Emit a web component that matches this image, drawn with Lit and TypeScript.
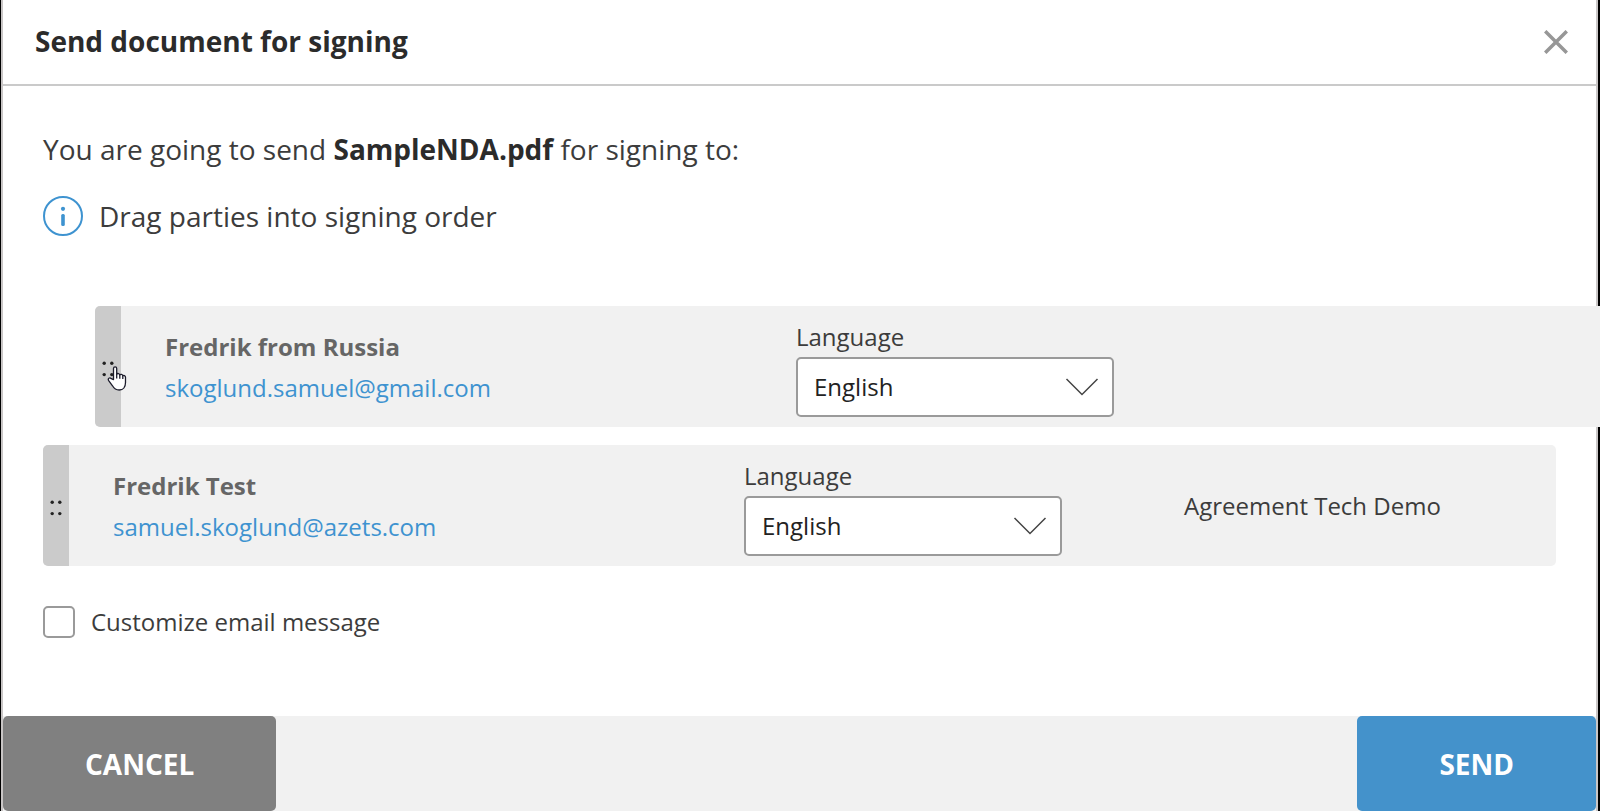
import { LitElement, html, css, svg } from "lit";
import { customElement, property, state } from "lit/decorators.js";
import { classMap } from "lit/directives/class-map.js";

interface Party {
  id: string;
  name: string;
  email: string;
  company: string;
  dragging: boolean;
}

const handCursor = svg`
  <path d="M6.500 13.600V2.600c0-2.400 3.200-2.400 3.200 0v5.600c.6-1.100 3-.9 3.100.7.7-1 2.800-.7 3 .9.8-.8 2.700-.3 2.700 1.500v5.200c0 4.200-2.200 7.500-6.200 7.500-3.600 0-5.300-1.500-6.800-4.200L1.700 14.600c-1.300-2.200 1-3.600 2.600-1.900z"
    fill="#fff" stroke="#1c1c2b" stroke-width="1.300" stroke-linejoin="round"></path>
  <path d="M9.700 8v4.600M12.800 9v3.800M15.800 10v3" fill="none" stroke="#1c1c2b" stroke-width="1.300"></path>`;

@customElement("party-row")
export class PartyRow extends LitElement {
  @property({ attribute: false }) party!: Party;

  static styles = css`
    :host {
      display: block;
    }
    .row {
      display: grid;
      grid-template-columns: 26px minmax(0, 1fr) 440px 372px;
      align-items: center;
      min-height: 121px;
      background: #f1f1f1;
      border-radius: 5px;
      overflow: hidden;
    }
    .handle {
      align-self: stretch;
      display: flex;
      align-items: center;
      justify-content: center;
      border: 0;
      padding: 5px 0 0;
      background: #cbcbcb;
      cursor: grab;
      position: relative;
    }
    .pointer {
      position: absolute;
      left: 12px;
      top: 60px;
    }
    .row.dragging {
      overflow: visible;
    }
    .row.dragging .handle {
      border-radius: 5px 0 0 5px;
    }
    .who {
      display: flex;
      flex-direction: column;
      padding-left: 44px;
      line-height: 41px;
    }
    .name {
      font-weight: 700;
      color: #666;
    }
    .email {
      color: #3e93d0;
      text-decoration: none;
    }
    .language {
      display: flex;
      flex-direction: column;
      gap: 3px;
      width: 318px;
      padding-top: 3px;
      line-height: 34px;
    }
    .picker {
      display: grid;
      align-items: center;
    }
    .picker > * {
      grid-area: 1 / 1;
    }
    select {
      appearance: none;
      height: 60px;
      width: 100%;
      border: 2px solid #9a9a9a;
      border-radius: 5px;
      background: #fff;
      padding: 0 16px;
      font: inherit;
      color: #222;
    }
    .chevron {
      justify-self: end;
      margin-right: 15px;
      pointer-events: none;
    }
  `;

  render() {
    const { id, name, email, company, dragging } = this.party;
    return html`
      <div class=${classMap({ row: true, dragging })}>
        <button class="handle" type="button" aria-label="Move ${name}">
          <svg width="12" height="16" viewBox="0 0 12 16" fill="#222">
            <circle cx="2.200" cy="2.200" r="1.700"></circle>
            <circle cx="9.800" cy="2.200" r="1.700"></circle>
            <circle cx="2.200" cy="13.600" r="1.700"></circle>
            <circle cx="9.800" cy="13.600" r="1.700"></circle>
          </svg>
          ${dragging
            ? html`<svg class="pointer" width="20" height="26" viewBox="0 0 20 26">${handCursor}</svg>`
            : null}
        </button>
        <div class="who">
          <span class="name">${name}</span>
          <a class="email" href="mailto:${email}">${email}</a>
        </div>
        <div class="language">
          <label for="lang-${id}">Language</label>
          <div class="picker">
            <select id="lang-${id}">
              <option>English</option>
            </select>
            <svg class="chevron" width="34" height="20" viewBox="0 0 34 20" fill="none" stroke="#444" stroke-width="1.500">
              <path d="M1.500 2 17 17.500 32.500 2"></path>
            </svg>
          </div>
        </div>
        <span>${company}</span>
      </div>
    `;
  }
}

@customElement("app-root")
export class AppRoot extends LitElement {
  @state() private parties: Party[] = [
    { id: "russia", name: "Fredrik from Russia", email: "skoglund.samuel@gmail.com", company: "", dragging: true },
    { id: "test", name: "Fredrik Test", email: "samuel.skoglund@azets.com", company: "Agreement Tech Demo", dragging: false },
  ];

  static styles = css`
    :host {
      display: block;
      box-sizing: border-box;
      min-height: 100vh;
      padding: 0 2px 0 1px;
      background: #000;
      overflow: hidden;
      font-family: "Open Sans", "Noto Sans", sans-serif;
      font-size: 24px;
      font-weight: 400;
      color: #3c3c3c;
    }
    .dialog {
      display: flex;
      flex-direction: column;
      box-sizing: border-box;
      min-height: 100vh;
      border: solid #c9c6c6;
      border-width: 0 2px;
      background: #fff;
    }
    header {
      display: flex;
      align-items: center;
      justify-content: space-between;
      height: 84px;
      padding: 0 28px 0 32px;
      border-bottom: 2px solid #cacaca;
    }
    h1 {
      margin: 0;
      padding-bottom: 2px;
      font-size: 28px;
      font-weight: 700;
      color: #2b2b2b;
    }
    .close {
      display: flex;
      border: 0;
      padding: 0;
      background: none;
      cursor: pointer;
    }
    main {
      flex: 1;
      padding: 43px 40px 0;
    }
    .intro,
    .hint {
      margin: 0;
      font-size: 28px;
      line-height: 40px;
    }
    .intro b {
      font-weight: 700;
      color: #2b2b2b;
    }
    .hint {
      display: flex;
      align-items: center;
      gap: 16px;
      margin-top: 27px;
    }
    .parties {
      display: flex;
      flex-direction: column;
      gap: 18px;
      margin: 70px 0 0;
      padding: 0;
      list-style: none;
    }
    .lifted {
      position: relative;
      left: 52px;
      z-index: 1;
    }
    .customize {
      display: flex;
      align-items: center;
      gap: 16px;
      width: fit-content;
      margin-top: 40px;
      line-height: 32px;
    }
    .customize input {
      appearance: none;
      width: 32px;
      height: 32px;
      margin: 0;
      border: 2px solid #9a9a9a;
      border-radius: 5px;
      background: #fff;
    }
    footer {
      display: flex;
      justify-content: space-between;
      height: 95px;
      background: #f1f1f1;
    }
    .action {
      border: 0;
      border-radius: 5px;
      padding: 0 82px;
      font: inherit;
      font-size: 28px;
      font-weight: 700;
      color: #fff;
      cursor: pointer;
    }
    .cancel {
      background: #808080;
    }
    .send {
      background: #4492cb;
    }
  `;

  render() {
    return html`
      <div class="dialog" role="dialog" aria-labelledby="title">
        <header>
          <h1 id="title">Send document for signing</h1>
          <button class="close" type="button" aria-label="Close">
            <svg width="24" height="24" viewBox="0 0 24 24" stroke="#979797" stroke-width="3.500">
              <path d="M1.200 1.200 22.800 22.800M22.800 1.200 1.200 22.800"></path>
            </svg>
          </button>
        </header>
        <main>
          <p class="intro">You are going to send <b>SampleNDA.pdf</b> for signing to:</p>
          <p class="hint">
            <svg width="40" height="40" viewBox="0 0 40 40">
              <circle cx="20" cy="20" r="19" fill="none" stroke="#3e93d0" stroke-width="2"></circle>
              <circle cx="20" cy="12.800" r="2.100" fill="#3e93d0"></circle>
              <rect x="18.200" y="18" width="3.600" height="12" rx="1.500" fill="#3e93d0"></rect>
            </svg>
            Drag parties into signing order
          </p>
          <ul class="parties">
            ${this.parties.map(
              (party) => html`
                <li class=${classMap({ lifted: party.dragging })}>
                  <party-row .party=${party}></party-row>
                </li>
              `
            )}
          </ul>
          <label class="customize"><input type="checkbox" />Customize email message</label>
        </main>
        <footer>
          <button class="action cancel" type="button">CANCEL</button>
          <button class="action send" type="button">SEND</button>
        </footer>
      </div>
    `;
  }
}
